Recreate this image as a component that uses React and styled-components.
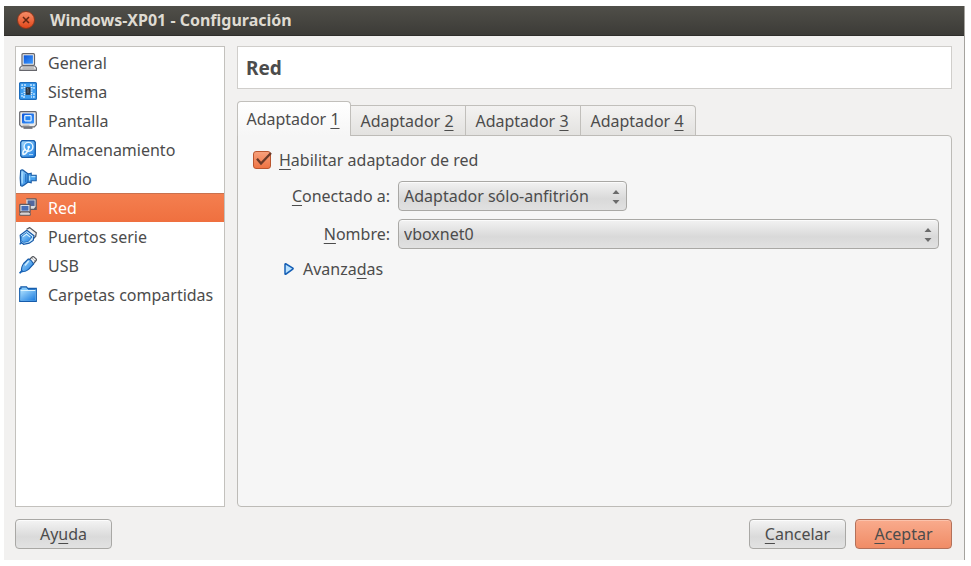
import React, { useState } from 'react';
import styled, { createGlobalStyle } from 'styled-components';

const GlobalStyle = createGlobalStyle`
    *{
        box-sizing:border-box;
    }
    body{
        margin:0;
        background:#fff;
        color:#4c4c4c;
        font-family:"Noto Sans", "Open Sans", sans-serif;
        font-size:16px;
        line-height:22px;
    }
    button, select, input{
        font:inherit;
        color:inherit;
        margin:0;
    }
    u{
        text-decoration-thickness:1px;
        text-underline-offset:3px;
        text-decoration-skip-ink:none;
    }
`;

const Gradients = () => (
    <GradientDefs width="0" height="0" aria-hidden="true">
        <defs>
            <linearGradient id="blue" x1="0" y1="0" x2="1" y2="1">
                <stop offset="0" stopColor="#a5dbfd" />
                <stop offset="1" stopColor="#1b7ce0" />
            </linearGradient>
            <linearGradient id="screen" x1="0" y1="0" x2="1" y2="1">
                <stop offset="0" stopColor="#0b55d8" />
                <stop offset="1" stopColor="#3f9bff" />
            </linearGradient>
            <linearGradient id="grey" x1="0" y1="0" x2="0" y2="1">
                <stop offset="0" stopColor="#ffffff" />
                <stop offset="1" stopColor="#c4c4c4" />
            </linearGradient>
        </defs>
    </GradientDefs>
);

const icons = {
    general: (
        <>
            <rect x="3" y="0.7" width="12.5" height="11.6" rx="1" fill="#eee" stroke="#66666c" strokeWidth="1.2" />
            <rect x="4.7" y="2.3" width="9.2" height="8.4" fill="url(#screen)" />
            <path d="M2.6 13h13.2l1.7 2v2.4H0.8V15z" fill="url(#grey)" stroke="#66666c" strokeWidth="1.1" />
            <path d="M3.5 15h11.4" stroke="#999" />
        </>
    ),
    sistema: (
        <>
            <rect x="0.6" y="0.6" width="16.8" height="16.8" rx="1" fill="#3d9df0" stroke="#1c6dbd" strokeWidth="1.2" />
            <path d="M3 7V3h4M11 3h4v4M15 11v4h-3M6 15H3v-4" fill="none" stroke="#c5e6ff" strokeWidth="1.3" strokeDasharray="2 1" />
            <path d="M4.6 5.6h2M4.6 8h2M4.6 10.4h2M11.5 5.6h2M11.5 8h2M11.5 10.4h2M5 13.2l1.5-1.5M13 13.2l-1.5-1.5" stroke="#d9efff" strokeWidth="1.1" />
            <rect x="6.6" y="5.2" width="4.9" height="7.6" fill="#2b3440" />
            <path d="M8 6.5h1v4.5" fill="none" stroke="#6c7888" strokeWidth="0.8" />
        </>
    ),
    pantalla: (
        <>
            <path d="M1.7 0.7h14.6q1 0 1 1v12.1l-2 2H2.7l-2-2V1.7q0-1 1-1z" fill="#ececec" stroke="#66666c" strokeWidth="1.2" />
            <rect x="3" y="2.6" width="12" height="10" rx="1" fill="url(#screen)" />
            <rect x="5.8" y="4.7" width="6.3" height="5.1" rx="0.5" fill="#2384f1" stroke="#e3f2ff" strokeWidth="1.2" />
            <path d="M4.5 17h9" stroke="#66666c" strokeWidth="1.6" />
            <path d="M3.5 14.2h7" stroke="#aaa" />
        </>
    ),
    almacenamiento: (
        <>
            <path d="M3 0.7h12l1.3 1.5v13.6L15 17.3H3l-1.3-1.5V2.2z" fill="url(#blue)" stroke="#165cab" strokeWidth="1.3" />
            <circle cx="9.5" cy="6.8" r="4.4" fill="#4aa5f3" stroke="#e9f6ff" strokeWidth="1.4" />
            <path d="M4 14.5c3.2-.3 4.8-2.5 5.8-7.2M4 14.5c-.6-3 .7-5 3-5.3" fill="none" stroke="#f2faff" strokeWidth="1.5" />
            <circle cx="9.7" cy="7" r="1.3" fill="#fff" />
            <path d="M10 14.6h4" stroke="#b8ddfb" />
        </>
    ),
    audio: (
        <>
            <path d="M1.7 1.4Q3.2 0 4.8 1.8L9.6 5.2v7.6L4.8 16.2q-1.6 1.8-3.1.4L1.2 9z" fill="url(#blue)" stroke="#1a5ba5" strokeWidth="1.2" />
            <path d="M9 5l3.2-.8v2h5v5.6h-5v2L9 13z" fill="#45a1ee" stroke="#1a5ba5" strokeWidth="1.1" />
            <path d="M3.2 3.3v11.2M10.6 6.8v4.6M12.4 7.6h4" fill="none" stroke="#a9ddff" strokeWidth="1.3" />
            <path d="M6.8 5v8.2" stroke="#1865b7" />
        </>
    ),
    red: (
        <>
            <path d="M7.3 .9h9.1q.8 0 .8.8v7.2l-1 1.2h1v1.3H7.4" fill="#ddd" stroke="#625a60" strokeWidth="1.3" />
            <rect x="8.6" y="2.4" width="7" height="5.6" fill="#51679e" />
            <path d="M1.6 6.3h8.8q.7 0 .7.7v7H.8V7q0-.7.8-.7z" fill="#ededed" stroke="#625a60" strokeWidth="1.3" />
            <rect x="2.4" y="7.9" width="7.1" height="4.8" fill="#496eb7" />
            <path d="M2 14h8l1.3 1.3v2H.7v-2z" fill="#d7d3d3" stroke="#625a60" />
        </>
    ),
    puertos: (
        <>
            <path d="M7.6 2.2L10.6.6l6.7 5.2-.6 3.6-3 2.8" fill="#f2f2f2" stroke="#53565d" strokeWidth="1.2" />
            <path d="M1.2 8.2l6.6-5 7.2 5.6-.8 4.6-4 2.8-5.6 1.1-2.8-2.4z" fill="#c9eaff" stroke="#1458a8" strokeWidth="1.2" />
            <path d="M2.4 9.4l5.2-3.8 5.4 4.4-3.6 4.4-4.8 1-2.6-2z" fill="url(#blue)" stroke="#2b7bcb" strokeWidth="1" />
            <path d="M4 9.6l3.5-2.5 3.7 3" fill="none" stroke="#d8f2ff" strokeWidth="1.1" />
            <path d="M3 15.6q-1.6.2-2 1.8" fill="none" stroke="#1664b9" strokeWidth="1.8" />
        </>
    ),
    usb: (
        <>
            <path d="M10.2 3.7L13.4.8q.8-.5 1.5.1l2.2 2q.7.8 0 1.6l-3 3.6z" fill="#f3f3f3" stroke="#54575d" strokeWidth="1.2" />
            <path d="M13.5 2.6l.8.7M15 4l.5.5" stroke="#555" />
            <path d="M9.4 3q2.6.4 5.2 5L9.6 13.4q-3 2.6-6.9 2.3-.9-4.3 2-8.2z" fill="url(#blue)" stroke="#165cab" strokeWidth="1.2" />
            <path d="M9.6 5L6 9.5" stroke="#ccecff" strokeWidth="1.5" />
            <path d="M3.6 14.8q-1.8.4-3 2.6" fill="none" stroke="#1662b8" strokeWidth="1.8" />
        </>
    ),
    carpetas: (
        <>
            <path d="M.7 16.4V3.3h1.2V1.8h5.6l1.2 1.5h8.6v13.1z" fill="#83c9fb" stroke="#165cab" strokeWidth="1.2" />
            <path d="M1.6 6h14.7v9.6H1.6z" fill="url(#blue)" />
            <path d="M1.5 5.5h14.8" stroke="#d9f2ff" />
            <path d="M9 4.4h7.5" stroke="#2575c6" />
        </>
    ),
};

const sections = [
    { id:'general', name:'General' },
    { id:'sistema', name:'Sistema' },
    { id:'pantalla', name:'Pantalla' },
    { id:'almacenamiento', name:'Almacenamiento' },
    { id:'audio', name:'Audio' },
    { id:'red', name:'Red' },
    { id:'puertos', name:'Puertos serie' },
    { id:'usb', name:'USB' },
    { id:'carpetas', name:'Carpetas compartidas' },
];

const Combo = ({ id, options, wide }) => (
    <ComboBox $wide={wide}>
        <select id={id}>
            {options.map(option => <option key={option}>{option}</option>)}
        </select>
        <svg width="8" height="16" viewBox="0 0 8 16" aria-hidden="true">
            <path d="M0.5 5L4 1l3.5 4zM0.5 11L4 15l3.5-4z" fill="#6b6b6b" />
        </svg>
    </ComboBox>
);

const App = () => {
    const [section, setSection] = useState('red');
    const [adapter, setAdapter] = useState(1);
    const [enabled, setEnabled] = useState(true);
    const current = sections.find(s => s.id === section);

    return(
        <Page>
            <GlobalStyle />
            <Gradients />
            <Window>
                <TitleBar>
                    <CloseButton type="button" aria-label="Cerrar">
                        <svg width="8" height="8" viewBox="0 0 8 8">
                            <path d="M1 1l6 6M7 1L1 7" stroke="#642611" strokeWidth="1.5" />
                        </svg>
                    </CloseButton>
                    <h1>Windows-XP01 - Configuración</h1>
                </TitleBar>
                <Main>
                    <Sidebar>
                        {sections.map(s => (
                            <SectionButton
                                key={s.id}
                                type="button"
                                $active={s.id === section}
                                onClick={() => setSection(s.id)}
                            >
                                <svg width="18" height="18" viewBox="0 0 18 18" aria-hidden="true">{icons[s.id]}</svg>
                                <span>{s.name}</span>
                            </SectionButton>
                        ))}
                    </Sidebar>
                    <Content>
                        <Heading>{current.name}</Heading>
                        <Tabs role="tablist">
                            {[1, 2, 3, 4].map(n => (
                                <Tab
                                    key={n}
                                    type="button"
                                    role="tab"
                                    aria-selected={n === adapter}
                                    $active={n === adapter}
                                    onClick={() => setAdapter(n)}
                                >
                                    Adaptador <u>{n}</u>
                                </Tab>
                            ))}
                        </Tabs>
                        <Panel role="tabpanel">
                            <CheckRow>
                                <CheckBox>
                                    <input
                                        id="enabled"
                                        type="checkbox"
                                        checked={enabled}
                                        onChange={e => setEnabled(e.target.checked)}
                                    />
                                    {enabled && (
                                        <svg width="20" height="18" viewBox="0 0 20 18" aria-hidden="true">
                                            <path d="M4 7.8L8 12.6 18 2" fill="none" stroke="#6b3a28" strokeWidth="2.3" />
                                        </svg>
                                    )}
                                </CheckBox>
                                <label htmlFor="enabled"><u>H</u>abilitar adaptador de red</label>
                            </CheckRow>
                            <Fields>
                                <label htmlFor="attached"><u>C</u>onectado a:</label>
                                <Combo id="attached" options={['Adaptador sólo-anfitrión', 'NAT', 'Adaptador puente', 'Red interna']} />
                                <label htmlFor="name"><u>N</u>ombre:</label>
                                <Combo id="name" wide options={['vboxnet0']} />
                            </Fields>
                            <Advanced type="button">
                                <svg width="10" height="12" viewBox="0 0 10 12" aria-hidden="true">
                                    <path d="M1 1.2q0-.6.7-.4L8.8 5q.7.6 0 1.2l-7.1 5q-.7.2-.7-.5z" fill="#b9e2ff" stroke="#165fb5" strokeWidth="1.5" />
                                </svg>
                                <span>Avanza<u>d</u>as</span>
                            </Advanced>
                        </Panel>
                    </Content>
                </Main>
                <Footer>
                    <PushButton type="button">Ay<u>u</u>da</PushButton>
                    <Actions>
                        <PushButton type="button"><u>C</u>ancelar</PushButton>
                        <PushButton type="button" $primary><u>A</u>ceptar</PushButton>
                    </Actions>
                </Footer>
            </Window>
        </Page>
    );
}

const GradientDefs = styled.svg`
    position:absolute;
`;
const Page = styled.div`
    display:flex;
    min-height:100vh;
    padding:6px 6px 6px 4px;
`;
const Window = styled.div`
    flex:1;
    min-width:0;
    display:flex;
    flex-direction:column;
    background:#f2f1f0;
    border-right:1px solid #a5a39e;
`;
const TitleBar = styled.header`
    display:flex;
    align-items:center;
    gap:15px;
    height:30px;
    padding:0 13px 2px;
    background:linear-gradient(#504f49, #3c3b37);
    border-bottom:1px solid #2f2e2b;
    h1{
        margin:0;
        color:#dfdbd2;
        font-size:16px;
        line-height:22px;
        font-weight:700;
    }
`;
const CloseButton = styled.button`
    display:flex;
    align-items:center;
    justify-content:center;
    width:18px;
    height:18px;
    padding:0;
    border:1px solid #8f371b;
    border-radius:50%;
    background:linear-gradient(#f68d68, #e2471a);
`;
const Main = styled.div`
    flex:1;
    display:flex;
    gap:12px;
    padding:10px 12px 0 11px;
`;
const Sidebar = styled.nav`
    flex:0 0 210px;
    display:flex;
    flex-direction:column;
    padding-top:1px;
    background:#fff;
    border:1px solid #c3c1bd;
`;
const SectionButton = styled.button`
    display:flex;
    align-items:center;
    gap:11px;
    height:29px;
    padding:0 3px;
    border:0;
    text-align:left;
    white-space:nowrap;
    color:${p => p.$active ? '#fff' : '#4c4c4c'};
    background:${p => p.$active ? 'linear-gradient(#f47f50, #ef703f)' : 'none'};
    box-shadow:${p => p.$active ? 'inset 0 1px #c9714e' : 'none'};
    svg{
        flex:none;
        margin-bottom:2px;
    }
`;
const Content = styled.main`
    flex:1;
    min-width:0;
    display:flex;
    flex-direction:column;
`;
const Heading = styled.h2`
    height:43px;
    margin:0 0 12px;
    padding:0 8px;
    background:#fff;
    border:1px solid #d0cecb;
    font-size:19px;
    line-height:42px;
    font-weight:700;
`;
const Tabs = styled.div`
    display:flex;
    align-items:flex-end;
`;
const Tab = styled.button`
    height:${p => p.$active ? '35px' : '30px'};
    width:${p => p.$active ? '114px' : '115px'};
    padding:0 2px 0 0;
    position:relative;
    white-space:nowrap;
    border:1px solid #c1bfbb;
    border-bottom:0;
    border-left-width:${p => p.$active ? '1px' : '0'};
    border-radius:${p => p.$active ? '4px 4px 0 0' : '0'};
    margin-bottom:${p => p.$active ? '-1px' : '0'};
    background:${p => p.$active ? 'linear-gradient(#fff, #f6f6f6)' : 'linear-gradient(#f3f2f1, #e3e2e0)'};
    &:last-child{
        border-top-right-radius:4px;
    }
`;
const Panel = styled.section`
    flex:1;
    display:flex;
    flex-direction:column;
    align-items:stretch;
    padding:13px 12px;
    background:#f6f6f6;
    border:1px solid #bdbbb7;
    border-radius:0 4px 4px 4px;
`;
const CheckRow = styled.div`
    display:flex;
    align-items:center;
    gap:6px;
    padding-left:3px;
`;
const CheckBox = styled.span`
    display:grid;
    width:20px;
    input, svg{
        grid-area:1 / 1;
    }
    svg{
        position:relative;
        pointer-events:none;
    }
    input{
        appearance:none;
        width:18px;
        height:18px;
        border:1px solid #b9562f;
        border-radius:3px;
        background:#fff;
    }
    input:checked{
        background:linear-gradient(#f7a07b, #ef7443);
    }
`;
const Fields = styled.div`
    display:grid;
    grid-template-columns:140px 1fr;
    align-items:center;
    gap:8px;
    padding-top:10px;
    label{
        text-align:right;
    }
`;
const ComboBox = styled.div`
    display:grid;
    align-items:center;
    width:${p => p.$wide ? '100%' : '229px'};
    select, svg{
        grid-area:1 / 1;
    }
    select{
        appearance:none;
        width:100%;
        height:30px;
        padding:0 24px 0 5px;
        border:1px solid #a9a8a5;
        border-radius:4px;
        background:linear-gradient(#f2f2f2, #d9d9d9 60%, #e1e1e1);
        box-shadow:inset 0 1px #fbfbfb;
    }
    svg{
        position:relative;
        justify-self:end;
        margin:2px 7px 0 0;
        pointer-events:none;
    }
`;
const Advanced = styled.button`
    display:flex;
    align-items:center;
    align-self:flex-start;
    gap:9px;
    margin:9px 0 0 34px;
    padding:0;
    border:0;
    background:none;
`;
const Footer = styled.footer`
    display:flex;
    justify-content:space-between;
    padding:12px 12px 11px 11px;
`;
const Actions = styled.div`
    display:flex;
    gap:9px;
`;
const PushButton = styled.button`
    width:97px;
    height:30px;
    padding:0;
    border:1px solid ${p => p.$primary ? '#b3715a' : '#a9a8a5'};
    border-radius:4px;
    background:${p => p.$primary
        ? 'linear-gradient(#f9ab8d, #f08c66)'
        : 'linear-gradient(#f4f4f4, #dadada 60%, #e2e2e2)'};
    box-shadow:inset 0 1px ${p => p.$primary ? '#fbc2ab' : '#fcfcfc'};
`;
export default App;
